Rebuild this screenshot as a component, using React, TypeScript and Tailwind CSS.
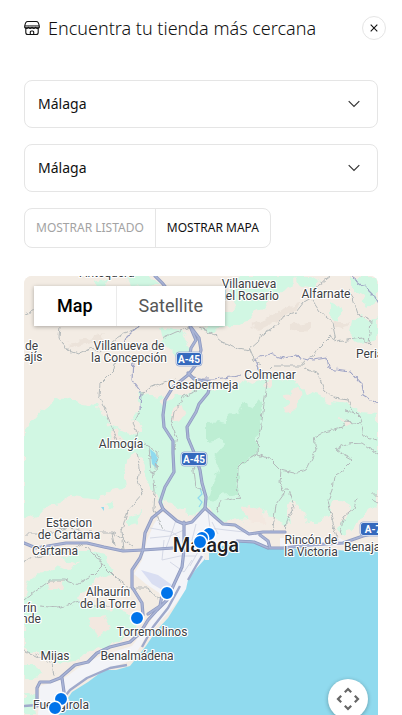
import { useState } from 'react';

const provinces = ['Málaga', 'Sevilla', 'Granada', 'Cádiz'];
const towns = ['Málaga', 'Torremolinos', 'Fuengirola', 'Benalmádena'];

// Map coordinates: the canvas starts at 24,276 and is 354 units wide
const forests = [
  'M24 432 L30 424 L42 410 L58 398 L76 401 L84 404 L98 406 L101 412 L108 416 L110 425 L124 432 L138 436 L138 448 L128 460 L124 474 L126 488 L112 490 L98 500 L84 498 L70 496 L58 504 L46 506 L36 516 L24 520 Z',
  'M136 392 L146 394 L160 396 L164 404 L164 505 L156 498 L146 480 L140 460 L134 450 L134 440 L142 426 L132 418 L142 408 Z',
  'M164 405 L175 394 L184 396 L198 388 L214 392 L228 388 L240 382 L252 386 L262 374 L276 372 L280 378 L296 380 L304 392 L318 396 L330 402 L350 404 L360 412 L378 414 L378 500 L366 512 L354 524 L344 536 L338 530 L350 512 L342 502 L334 500 L330 512 L322 522 L308 524 L300 506 L292 500 L286 512 L288 525 L276 520 L268 510 L254 516 L246 520 L230 522 L216 516 L208 508 L196 514 L182 512 L172 506 L160 498 Z',
  'M240 276 L296 276 L292 284 L286 290 L270 298 L264 308 L254 312 L246 322 L228 328 L206 332 L200 326 L216 320 L222 312 L236 308 L228 298 L228 290 Z',
  'M296 276 L312 276 L322 282 L312 290 L300 286 Z',
  'M352 276 L378 276 L378 300 L368 306 L362 298 L352 292 Z',
  'M330 304 L344 312 L338 320 L330 314 Z',
  'M352 320 L362 314 L368 322 L378 318 L378 340 L360 344 L350 334 Z',
  'M160 326 L182 330 L190 346 L186 362 L176 354 L164 342 Z',
  'M96 282 L110 278 L106 288 L98 288 Z',
  'M124 276 L150 276 L160 286 L130 288 Z',
  'M30 580 L40 572 L52 566 L70 570 L84 562 L98 576 L88 588 L80 600 L104 610 L132 612 L140 624 L120 640 L96 648 L80 660 L60 664 L44 652 L30 654 L24 646 L24 600 Z',
  'M60 558 L72 552 L84 550 L104 556 L112 574 L96 580 L84 566 Z',
  'M128 516 L142 512 L140 524 L128 526 Z',
  'M104 504 L114 500 L110 510 Z',
  'M24 664 L36 664 L42 674 L24 680 Z',
  'M24 690 L34 694 L36 715 L24 715 Z',
];

const clearings = [
  'M286 396 L298 388 L300 396 L294 410 L285 413 L288 404 Z',
  'M262 380 L272 376 L272 386 L264 388 Z',
  'M284 408 L292 408 L290 414 Z',
  'M172 412 L184 404 L186 412 L180 422 L172 420 Z',
  'M88 620 L104 616 L110 628 L96 638 Z',
  'M50 584 L66 580 L62 590 L48 590 Z',
  'M240 508 L250 506 L262 512 L268 524 L248 522 Z',
  'M110 432 L118 430 L122 440 L114 446 Z',
  'M340 420 L352 422 L346 428 Z',
];

const denseWoods = [
  'M206 424 L216 422 L226 424 L232 412 L238 416 L244 402 L252 406 L258 398 L262 404 L260 420 L258 440 L258 456 L248 458 L242 466 L238 480 L237 494 L222 496 L214 502 L208 500 L212 484 L218 472 L214 462 L222 446 L218 438 L206 440 Z',
];

const ridges = [
  'M250 326 L270 318 L286 306 L300 302 L292 312 L272 324 L256 332 Z',
  'M66 342 L84 340 L104 334 L98 342 L80 348 Z',
  'M290 326 L312 322 L306 332 L290 334 Z',
  'M330 318 L350 322 L344 330 L334 328 Z',
];

const trails = [
  'M24 314 L38 309 L60 312',
  'M60 326 L59 338 L68 350 L78 354 L92 348 L100 352 L122 334 L138 328',
  'M116 358 L114 370 L100 384 L99 396 L106 410 L110 424 L118 440',
  'M140 396 L150 388 L164 382 L176 378',
  'M163 338 L176 332 L192 328',
  'M140 410 L133 424 L137 432 L134 446',
  'M137 452 L140 468 L138 480 L142 494 L128 510 L122 530 L124 550',
  'M144 444 L157 452 L156 472 L151 474 L149 446 M153 474 L155 490 L154 508 L162 530',
  'M24 534 L46 534 L66 528 L84 532 L112 532 L132 546 M112 532 L114 546',
  'M200 328 L210 332 L222 342 L238 348 L250 350 L254 360 L261 364',
  'M249 350 L258 342 L262 334 L276 326 L284 316 L296 312 L304 302 L311 298 L314 288 L330 276',
  'M312 300 L320 312 L332 322 L336 340 L330 336 L318 348 L311 358',
  'M336 342 L348 340 L362 338 L369 344 L370 334 L371 320 L358 314 L354 302 L350 290',
  'M270 370 L274 366 L302 366 L306 358 M304 368 L318 374 L324 390 L334 398 L348 400 L354 412 L362 420',
  'M264 376 L267 384 L264 404 L262 420 L259 434 L258 454 L244 462 L238 468 L237 486 L240 498 L220 501 L217 514',
  'M258 454 L270 459 L281 470 L294 473 L306 470 L316 450 L314 438 L324 432 L342 428 L346 422 L362 424 L360 416 L346 410',
  'M336 450 L348 444 L362 443 L378 454 M336 450 L354 460 L344 470 L334 476 L332 490 L328 500 L332 520 L338 540',
  'M362 426 L364 436 L376 440',
  'M281 470 L280 482 L284 494 L276 505 L274 520 L272 532 M284 490 L288 490 L294 508 L286 522 L285 532',
  'M357 498 L354 508 L344 516 L340 534',
  'M371 494 L378 494 M372 500 L378 503',
  'M198 390 L184 396 L174 412 L172 424 L177 438 L174 450',
  'M193 463 L196 486 L203 494',
  'M24 600 L36 590 L50 580 L64 580 L76 584 L92 576 L102 566 L98 554',
  'M24 562 L30 558 L66 552 L84 544',
  'M40 606 L58 608 L78 602 L92 606 L110 606',
  'M86 546 L104 566 L116 578 L130 588 L148 588 L156 598 L166 596',
  'M24 650 L36 656 L50 662 M52 662 L54 676',
];

const streets = [
  'M150 528 L172 532 L180 538 M164 540 L162 560 L180 556 L196 556',
  'M176 520 L172 532 L166 548 M196 524 L192 540 L198 552 L190 566',
  'M208 512 L210 528 L226 530 L244 532 M170 562 L184 572 L192 560',
  'M150 538 L170 536 L184 530 M212 522 L218 534',
];

const purpleRoads = [
  'M190 377 L198 379 L214 379 L232 377 L242 375',
  'M261 374 L256 360 L260 356 L270 354 L284 358 L296 356 L314 360 L326 358 L328 368 L350 371 L362 384 L364 396 L378 404',
  'M350 276 L364 286 L374 296 L378 304',
  'M140 324 L126 338 L124 346 M133 360 L132 380 L141 392 L140 410',
];

const highways = [
  'M155 276 Q162 282 168 290 M190 326 L196 340 L191 348 L190 354 M190 326 L199 338 L201 350 L198 362 L192 370 L188 375 L173 387 L165 400 L163 415 L164 427 L173 441 L173 453 L174 472 L165 487 L160 502 L163 509',
  'M188 373 L194 379 L210 382 M210 386 L208 393 L199 404 L196 412 L187 427 L188 438 L193 450 L200 470 L202 483 L206 497 L205 508',
  'M163 509 L152 518 L145 533 L143 550 L140 558 L132 570 L132 587 L142 603 L143 615',
  'M163 509 L177 521 L184 524 L192 522 L205 508 L215 517 L223 524 L235 525 L249 534 L263 532 L285 532',
  'M24 543 L36 548 L66 543 L87 543 L104 547 L123 551 L143 550 L173 548',
  'M237 541 L254 542 L268 548 M260 535 L268 541 L270 548 L283 548 L310 545 L343 543 L363 536 L378 532',
  'M184 522 L184 550 L182 567 L175 582 L167 600 L157 610 L148 620 L140 633 L130 642 L110 647 L97 653 L88 662 L75 665 L60 678 L50 682 L40 682 L37 688 L37 706',
  'M62 678 L64 692',
  'M163 590 L160 606 L148 614',
];

const coastRoads = [
  'M202 556 L196 566 L188 580 M180 586 L168 608 L153 627 L142 647 M127 665 L110 668 L87 678 L70 690 L62 700',
  'M24 706 L50 704',
];

const labels = [
  { text: 'Antequera', x: 107, y: 277, anchor: 'middle' },
  { text: 'Villanueva', x: 249, y: 288, anchor: 'middle' },
  { text: 'del Rosario', x: 249, y: 300, anchor: 'middle' },
  { text: 'Alfarnate', x: 326, y: 298, anchor: 'middle' },
  { text: 'de', x: 25, y: 350, anchor: 'start' },
  { text: 'ajís', x: 24, y: 361, anchor: 'start' },
  { text: 'Villanueva de', x: 129, y: 350, anchor: 'middle' },
  { text: 'la Concepción', x: 129, y: 362, anchor: 'middle' },
  { text: 'Periana', x: 356, y: 358, anchor: 'start' },
  { text: 'Colmenar', x: 270, y: 379, anchor: 'middle' },
  { text: 'Casabermeja', x: 203, y: 389, anchor: 'middle' },
  { text: 'Almogía', x: 121, y: 448, anchor: 'middle' },
  { text: 'Estacion', x: 69, y: 527, anchor: 'middle' },
  { text: 'de Cartama', x: 69, y: 539, anchor: 'middle' },
  { text: 'Cártama', x: 55, y: 555, anchor: 'middle' },
  { text: 'Rincón de', x: 311, y: 544, anchor: 'middle' },
  { text: 'la Victoria', x: 311, y: 556, anchor: 'middle' },
  { text: 'Benajarafe', x: 344, y: 551, anchor: 'start' },
  { text: 'Alhaurín', x: 108, y: 596, anchor: 'middle' },
  { text: 'de la Torre', x: 108, y: 608, anchor: 'middle' },
  { text: 'rín', x: 23, y: 612, anchor: 'start' },
  { text: 'nde', x: 21, y: 623, anchor: 'start' },
  { text: 'Torremolinos', x: 152, y: 636, anchor: 'middle' },
  { text: 'Mijas', x: 55, y: 660, anchor: 'middle' },
  { text: 'Benalmádena', x: 137, y: 660, anchor: 'middle' },
  { text: 'Fuengirola', x: 61, y: 709, anchor: 'middle' },
] as const;

const shields = [
  { text: 'A-45', x: 189, y: 359 },
  { text: 'A-45', x: 194, y: 459 },
  { text: 'A-7', x: 373, y: 529 },
];

const stores = [
  { x: 209, y: 534 },
  { x: 202, y: 538 },
  { x: 200, y: 542 },
  { x: 167, y: 593 },
  { x: 137, y: 618 },
  { x: 61, y: 699 },
  { x: 55, y: 708 },
];

function StoreIcon() {
  return (
    <svg viewBox="0 0 16 16" className="h-4 w-4 shrink-0" fill="none" stroke="#111" strokeWidth="1.1" strokeLinejoin="round" aria-hidden="true">
      <path d="M.7 6.2C1 4 2 1.500 3.700 1.500h8.600C14 1.500 15 4 15.300 6.200v1H.7z" />
      <path d="M.8 5.800h14.400" strokeWidth=".8" />
      <path d="M.7 7.200c.6 1.600 3 1.600 3.700 0 .7 1.600 2.900 1.600 3.600 0 .7 1.600 2.900 1.600 3.600 0 .7 1.600 3.100 1.600 3.700 0" />
      <path d="M1.800 8.500v4q0 2 2 2h8.400q2 0 2-2v-4" />
      <path d="M6.300 14.200v-2.200q0-1 1-1h1.400q1 0 1 1v2.200" />
    </svg>
  );
}

function StoreSelect({ id, label, options }: { id: string; label: string; options: string[] }) {
  return (
    <div className="relative">
      <label htmlFor={id} className="sr-only">{label}</label>
      <select id={id} className="h-12 w-full appearance-none rounded-lg border border-[#e5e5e5] bg-white px-[13px] text-sm text-[#111]">
        {options.map((option) => (
          <option key={option}>{option}</option>
        ))}
      </select>
      <svg viewBox="0 0 12 8" className="pointer-events-none absolute top-5 right-[18px] h-2 w-3" fill="none" stroke="#333" strokeWidth="1.2" aria-hidden="true">
        <path d="M.7 1.2 6 6.5l5.3-5.3" />
      </svg>
    </div>
  );
}

function MapCanvas() {
  return (
    <svg viewBox="24 276 354 439" preserveAspectRatio="xMidYMin slice" className="block h-full w-full" role="img" aria-label="Mapa de tiendas">
      <defs>
        <filter id="rough" x="-5%" y="-5%" width="110%" height="110%">
          <feTurbulence type="fractalNoise" baseFrequency="0.08" numOctaves="3" seed="4" />
          <feDisplacementMap in="SourceGraphic" scale="12" xChannelSelector="R" yChannelSelector="G" />
        </filter>
        <filter id="winding" x="-5%" y="-5%" width="110%" height="110%">
          <feTurbulence type="fractalNoise" baseFrequency="0.16" numOctaves="2" seed="9" />
          <feDisplacementMap in="SourceGraphic" scale="6" xChannelSelector="R" yChannelSelector="G" />
        </filter>
      </defs>
      <rect x="24" y="276" width="354" height="439" fill="#f3ece4" />
      <g filter="url(#rough)">
        <g fill="#ece3da">
          {ridges.map((d) => <path key={d} d={d} />)}
        </g>
        <g fill="#d1f7e3">
          {forests.map((d) => <path key={d} d={d} />)}
        </g>
        <g fill="#f3e8e0">
          {clearings.map((d) => <path key={d} d={d} />)}
        </g>
        <g fill="#bdeed3">
          {denseWoods.map((d) => <path key={d} d={d} />)}
        </g>
      </g>
      <g fill="#f3f4f8">
        <path d="M162 512 L178 520 L186 526 L206 510 L228 526 L262 534 L272 548 L238 543 L212 552 L196 572 L186 590 L174 606 L158 624 L144 640 L132 660 L110 668 L86 678 L66 694 L58 715 L38 715 L40 686 L62 680 L78 668 L100 656 L132 646 L150 622 L164 596 L146 584 L134 574 L142 560 L147 540 L154 524 Z" />
        <path d="M280 538 L340 538 L350 545 L280 549 Z" />
      </g>
      <path d="M141 570 L158 575 L172 585 L166 592 L152 584 Z" fill="#d9def2" />
      <path
        d="M378 549 L347 551 L318 548 L283 549 L268 548 L260 543 L250 540 L236 542 L222 546 L210 551 L204 560 L196 569 L188 580 L186 589 L178 602 L168 618 L156 631 L146 646 L130 666 L116 670 L104 670 L88 682 L72 692 L64 704 L58 715 L378 715 Z"
        fill="#90daee"
      />
      <path d="M204 553 L209 553 L209 560 L205 560 Z" fill="#f3efe8" />
      <g fill="#90daee">
        <path d="M150 449 L155 453 L158 459 L156 468 L152 464 Z" />
        <path d="M101 507 L104 507 L104 511 Z" />
      </g>
      <path d="M200 488 L202 494 L198 498 L202 502 L199 507" fill="none" stroke="#90daee" strokeWidth="1.2" />
      <g fill="none" stroke="#b3b9ba" strokeWidth="1" strokeLinejoin="round" filter="url(#winding)">
        {trails.map((d) => <path key={d} d={d} />)}
      </g>
      <g fill="none" stroke="#d5d9e6" strokeWidth="1">
        {streets.map((d) => <path key={d} d={d} />)}
      </g>
      <g fill="none" stroke="#a0a5c6" strokeWidth="1.2" strokeLinejoin="round" filter="url(#winding)">
        {purpleRoads.map((d) => <path key={d} d={d} />)}
      </g>
      <g fill="none" stroke="#8f9ac0" strokeWidth="3.2" strokeLinejoin="round" strokeLinecap="round">
        {highways.map((d) => <path key={d} d={d} />)}
      </g>
      <g fill="none" stroke="#a9b4d6" strokeWidth="1.6" strokeLinejoin="round" strokeLinecap="round">
        {highways.map((d) => <path key={d} d={d} />)}
      </g>
      <g fill="none" stroke="#9fa9cb" strokeWidth="2.4" strokeLinejoin="round">
        {coastRoads.map((d) => <path key={d} d={d} />)}
      </g>
      {shields.map(({ text, x, y }) => (
        <g key={`${x}-${y}`}>
          <rect x={x - 13} y={y - 7} width="26" height="14" rx="3" fill="#fff" stroke="#8fa5cf" strokeWidth=".8" />
          <rect x={x - 12} y={y - 6} width="24" height="12" rx="2" fill="#3569bd" />
          <text x={x} y={y + 4} textAnchor="middle" fill="#fff" className="font-[Roboto,sans-serif] text-[10px] font-bold">{text}</text>
        </g>
      ))}
      <g fill="#3c4043" stroke="#fff" strokeWidth="2.2" strokeLinejoin="round" paintOrder="stroke" className="font-[Roboto,sans-serif] text-[12px]">
        {labels.map(({ text, x, y, anchor }) => (
          <text key={text} x={x} y={y} textAnchor={anchor}>{text}</text>
        ))}
        <text x="206" y="552" textAnchor="middle" fill="#202124" className="text-[20px] font-medium">Málaga</text>
      </g>
      <g fill="#0073ea" stroke="#fff" strokeWidth="1.5">
        {stores.map(({ x, y }) => <circle key={`${x}-${y}`} cx={x} cy={y} r="6.7" />)}
      </g>
    </svg>
  );
}

export default function App() {
  const [view, setView] = useState<'list' | 'map'>('map');

  const tab = (active: boolean) => (active ? 'text-[#111]' : 'text-[#a3a3a3]');

  return (
    <main className="flex h-screen flex-col overflow-hidden bg-white px-6 pt-4 font-['Noto_Sans',sans-serif] text-[#111]">
      <header className="-mr-2 flex h-6 shrink-0 items-center gap-2">
        <StoreIcon />
        <h1 className="flex-1 text-lg leading-6 font-light whitespace-nowrap">Encuentra tu tienda más cercana</h1>
        <button type="button" aria-label="Cerrar" className="flex h-6 w-6 items-center justify-center rounded-full border border-[#e5e5e5]">
          <svg viewBox="0 0 8 8" className="h-2 w-2" stroke="#111" strokeWidth="1.1" aria-hidden="true">
            <path d="M.7.7l6.6 6.6M7.3.7.7 7.3" />
          </svg>
        </button>
      </header>

      <div className="mt-10 flex shrink-0 flex-col gap-4">
        <StoreSelect id="province" label="Provincia" options={provinces} />
        <StoreSelect id="town" label="Población" options={towns} />
        <div className="flex h-10 self-start rounded-lg border border-[#e5e5e5] text-xs">
          <button type="button" aria-pressed={view === 'list'} onClick={() => setView('list')} className={`px-[11px] ${tab(view === 'list')}`}>
            MOSTRAR LISTADO
          </button>
          <button type="button" aria-pressed={view === 'map'} onClick={() => setView('map')} className={`border-l border-[#e5e5e5] px-[11px] ${tab(view === 'map')}`}>
            MOSTRAR MAPA
          </button>
        </div>
      </div>

      <section className="relative mt-7 min-h-0 flex-1 overflow-hidden rounded-t-lg bg-[#f3ece4]">
        <MapCanvas />
        <div className="absolute top-[10px] left-[10px] flex h-10 bg-white font-[Roboto,sans-serif] text-lg shadow-[0_1px_4px_rgba(0,0,0,0.3)]">
          <button type="button" className="px-[23px] font-medium text-black">Map</button>
          <button type="button" className="border-l border-[#ebebeb] px-[22px] text-[#565656]">Satellite</button>
        </div>
        <button type="button" aria-label="Map camera controls" className="absolute right-[10px] -bottom-1 flex h-10 w-10 items-center justify-center rounded-full bg-white shadow-[0_1px_4px_rgba(0,0,0,0.3)]">
          <svg viewBox="0 0 24 24" className="h-6 w-6" fill="none" stroke="#666" strokeWidth="2.2" aria-hidden="true">
            <path d="M8.800 5.200 12 2l3.200 3.200M8.800 18.800 12 22l3.200-3.200M5.200 8.800 2 12l3.200 3.200M18.800 8.800 22 12l-3.200 3.200" />
          </svg>
        </button>
      </section>
    </main>
  );
}
